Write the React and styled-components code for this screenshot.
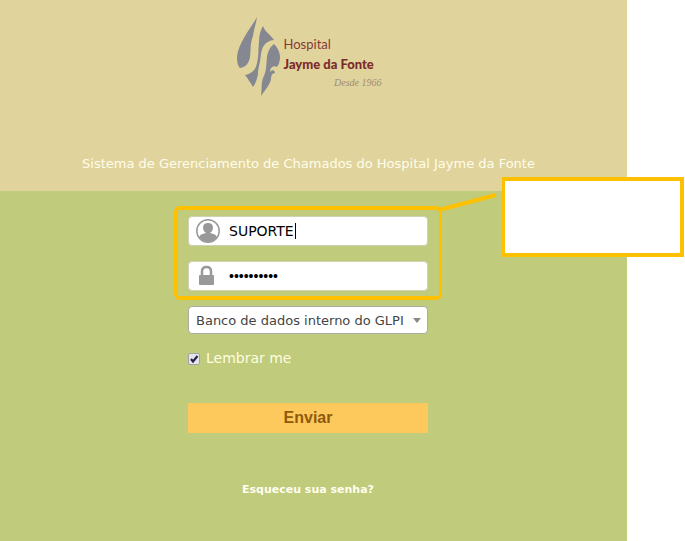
import React, { useState } from "react";
import styled, { createGlobalStyle } from "styled-components";

const GlobalStyle = createGlobalStyle`
  *, *::before, *::after { box-sizing: border-box; }
  body {
    margin: 0;
    background: #fff;
    font-family: "DejaVu Sans", Verdana, sans-serif;
    font-size: 13px;
  }
`;

const Page = styled.div`
  display: flex;
  flex-direction: column;
  min-height: 100vh;
  margin-right: 58px;
  background: #c0cb7b;
`;

const Header = styled.header`
  display: flex;
  flex-direction: column;
  align-items: center;
  gap: 56px;
  padding: 16px 10px 18px 0;
  background: #e0d39c;
`;

const Logo = styled.div`
  display: flex;
  gap: 3px;
  width: 146px;
`;

const Mark = styled.svg`
  flex: none;
  width: 45px;
  height: 82px;
`;

const Wordmark = styled.div`
  display: flex;
  flex: 1;
  flex-direction: column;
  padding-top: 18px;
  font-family: Lato, sans-serif;
  font-size: 13px;
  line-height: 20px;
  color: #853b36;
  white-space: nowrap;
`;

const LogoName = styled.strong`
  font-weight: 900;
  color: #7b2b2b;
`;

const Since = styled.em`
  align-self: flex-end;
  font-family: "Liberation Serif", serif;
  font-size: 10px;
  line-height: 18px;
  color: #9d8d78;
`;

const Tagline = styled.h1`
  margin: 0;
  font-size: 13px;
  font-weight: 400;
  line-height: 19px;
  color: #fffdea;
  text-align: center;
`;

const Form = styled.form`
  display: flex;
  flex-direction: column;
  width: 240px;
  margin: 0 auto;
  padding-top: 25px;
`;

const FormArea = styled.main`
  padding-right: 11px;
`;

const Credentials = styled.div`
  position: relative;
  display: grid;
  gap: 15px;

  &::after {
    content: "";
    position: absolute;
    inset: -10px -14px -9px;
    border: 4px solid #ffc000;
    border-width: 4px 3px;
    border-radius: 6px;
    pointer-events: none;
  }
`;

const Field = styled.label`
  position: relative;
  display: flex;
  align-items: center;
  height: 30px;
  padding-left: 7px;
  gap: 8px;
  border: 1px solid #cfd1b4;
  border-radius: 4px;
  background: #fff;
`;

const FieldIcon = styled.svg`
  flex: none;
  width: 24px;
  height: 24px;
`;

const Input = styled.input`
  flex: 1;
  min-width: 0;
  padding: 0 0 0 1px;
  border: 0;
  outline: 0;
  background: transparent;
  color: #000;
  font-family: ${(p) => (p.type === "password" ? '"Liberation Sans"' : '"DejaVu Sans"')}, sans-serif;
  font-size: 14px;
`;

const Caret = styled.span`
  position: absolute;
  left: 106px;
  top: 6px;
  width: 1px;
  height: 16px;
  background: #000;
`;

const Callout = styled.aside`
  position: absolute;
  left: 314px;
  top: -39px;
  width: 182px;
  height: 80px;
  border: 4px solid #ffc000;
  border-left-width: 3px;
  background: #fff;
`;

const Pointer = styled.svg`
  position: absolute;
  left: 250px;
  top: -26px;
  width: 60px;
  height: 26px;
`;

const SelectBox = styled.div`
  position: relative;
  margin-top: 15px;
`;

const Select = styled.select`
  display: block;
  width: 100%;
  height: 28px;
  padding: 1px 20px 0 7px;
  border: 1px solid #aaaca0;
  border-radius: 4px;
  appearance: none;
  background: #fff;
  color: #444;
  font: 13px "DejaVu Sans", sans-serif;
`;

const Arrow = styled.svg`
  position: absolute;
  right: 7px;
  top: 12px;
  width: 8px;
  height: 5px;
  pointer-events: none;
`;

const Remember = styled.label`
  display: flex;
  align-items: center;
  gap: 6px;
  margin-top: 14px;
  font-size: 14px;
  line-height: 20px;
  color: #fffde0;
`;

const CheckBox = styled.span`
  display: grid;
  width: 12px;
  height: 12px;
  margin-top: 2px;

  > * { grid-area: 1 / 1; }
`;

const Check = styled.input`
  width: 12px;
  height: 12px;
  margin: 0;
  border: 1px solid #a3a3a8;
  border-radius: 2px;
  appearance: none;
  background: #e6e6ea;

  & + svg { visibility: hidden; }
  &:checked + svg { visibility: visible; }
`;

const Tick = styled.svg`
  width: 12px;
  height: 12px;
  pointer-events: none;
`;

const Submit = styled.button`
  height: 30px;
  margin-top: 35px;
  padding: 0;
  border: 0;
  background: #fec95c;
  color: #8f5a0a;
  font: bold 16px "Liberation Sans", Arial, sans-serif;
  cursor: pointer;
`;

const Forgot = styled.a`
  align-self: center;
  margin-top: 49px;
  font-size: 11px;
  font-weight: 700;
  line-height: 16px;
  color: #fffef0;
  text-decoration: none;
`;

function LogoMark() {
  return (
    <Mark viewBox="0 0 45 82" fill="#868891" aria-hidden="true">
      <path d="M21 1C15 12 2 27 1 41C1 47 2 50 4 52C10 51 13 47 14 41C15 33 14 28 17 20C18 13 20 8 21 1Z" />
      <path d="M27 10C29 16 34 18 38 24C29 25 26 31 25 38C24 48 22 52 22 58C21 63 20 67 17 71C14 66 12 63 9 59C17 57 20 53 21 47C23 39 22 34 23 26C23 20 24 15 27 10Z" />
      <path d="M38 28C41 31 44 36 44 41C44 45 43 48 41 51C37 49 34 52 34 56C36 53 39 54 39 57C36 57 35 60 35 63C34 69 29 74 25 80C26 73 25 68 27 62C31 54 30 49 31 41C32 35 34 31 38 28Z" />
    </Mark>
  );
}

export default function App() {
  const [user, setUser] = useState("SUPORTE");
  const [password, setPassword] = useState("suporte123");

  return (
    <>
      <GlobalStyle />
      <Page>
        <Header>
          <Logo>
            <LogoMark />
            <Wordmark>
              <span>Hospital</span>
              <LogoName>Jayme da Fonte</LogoName>
              <Since>Desde 1966</Since>
            </Wordmark>
          </Logo>
          <Tagline>Sistema de Gerenciamento de Chamados do Hospital Jayme da Fonte</Tagline>
        </Header>
        <FormArea>
          <Form onSubmit={(e) => e.preventDefault()}>
            <Credentials>
              <Field>
                <FieldIcon viewBox="0 0 24 24" aria-hidden="true">
                  <circle cx="12" cy="12" r="11.200" fill="#fff" stroke="#999" strokeWidth="1.500" />
                  <path d="M7 9Q7 4 12 4Q17 4 17 9Q17 12 14 14Q20 15 21 18Q17 23 12 23Q7 23 3 18Q4 15 10 14Q7 12 7 9Z" fill="#999" />
                </FieldIcon>
                <Input type="text" aria-label="Usuário" value={user} onChange={(e) => setUser(e.target.value)} />
                <Caret />
              </Field>
              <Field>
                <FieldIcon viewBox="0 0 24 24" aria-hidden="true">
                  <path d="M6 12V7.500C6 4.500 7.500 3 10.500 3S15 4.500 15 7.500V12" fill="none" stroke="#999" strokeWidth="2.500" />
                  <rect x="3" y="11" width="15" height="10" rx="1" fill="#999" />
                </FieldIcon>
                <Input type="password" aria-label="Senha" value={password} onChange={(e) => setPassword(e.target.value)} />
              </Field>
              <Pointer viewBox="0 0 60 26" aria-hidden="true">
                <path d="M1 20L58 5" stroke="#ffc000" strokeWidth="4" />
              </Pointer>
              <Callout />
            </Credentials>
            <SelectBox>
              <Select aria-label="Origem de login">
                <option>Banco de dados interno do GLPI</option>
              </Select>
              <Arrow viewBox="0 0 8 5" aria-hidden="true">
                <path d="M0 0H8L4 5Z" fill="#888" />
              </Arrow>
            </SelectBox>
            <Remember>
              <CheckBox>
                <Check type="checkbox" defaultChecked />
                <Tick viewBox="0 0 12 12" aria-hidden="true">
                  <path d="M3 6L5 8.500L9.500 3" fill="none" stroke="#25254a" strokeWidth="2.200" />
                </Tick>
              </CheckBox>
              Lembrar me
            </Remember>
            <Submit type="submit">Enviar</Submit>
            <Forgot href="#senha">Esqueceu sua senha?</Forgot>
          </Form>
        </FormArea>
      </Page>
    </>
  );
}
